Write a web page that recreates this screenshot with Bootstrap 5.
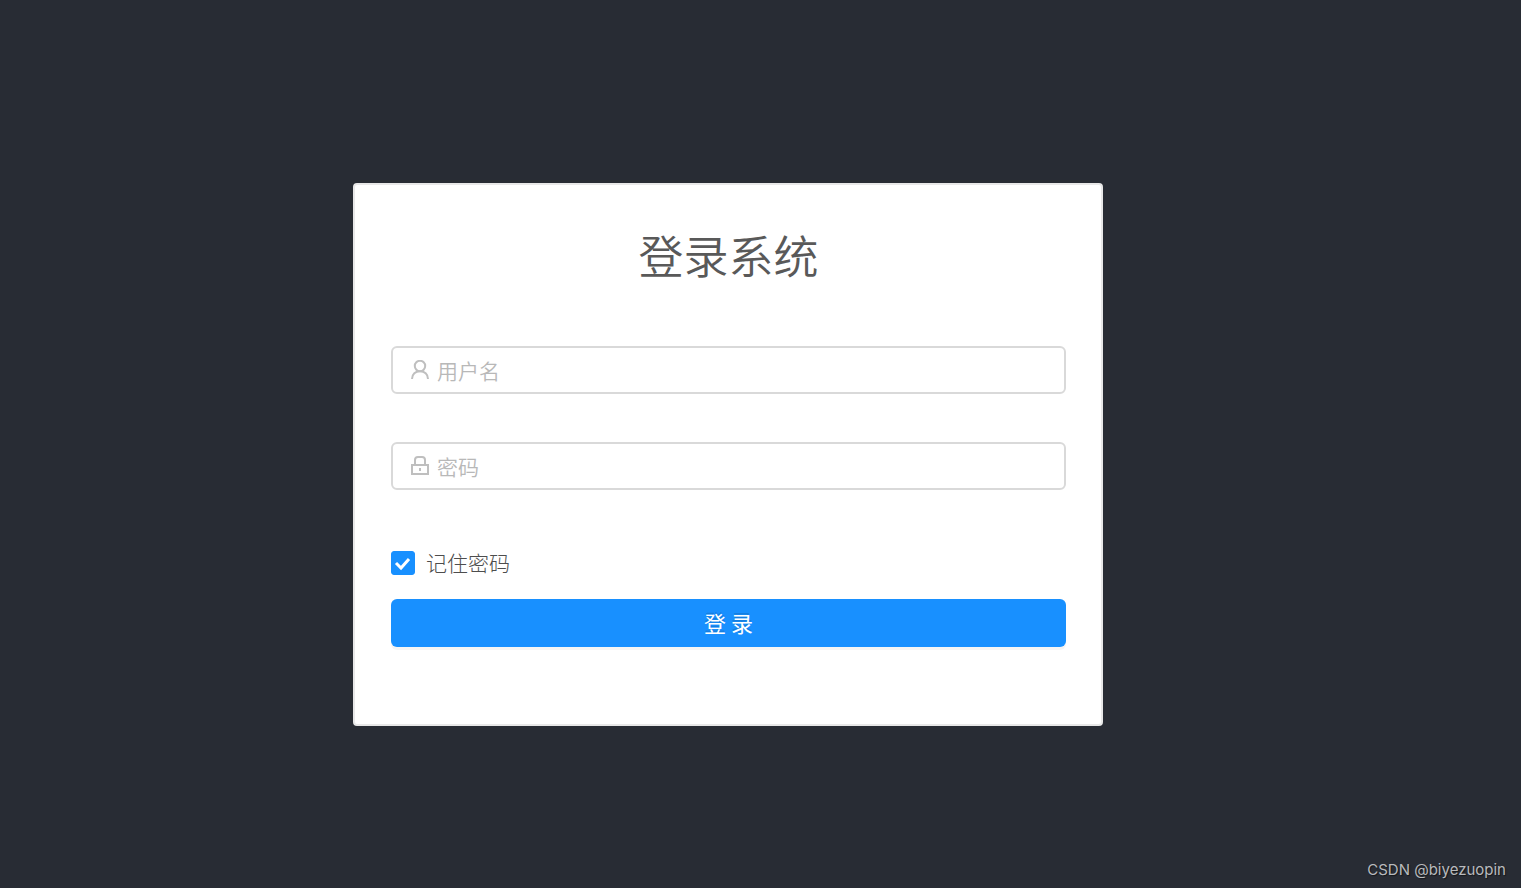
<!DOCTYPE html>
<html lang="zh-CN">
<head>
<meta charset="utf-8">
<meta name="viewport" content="width=device-width, initial-scale=1">
<title>登录系统</title>
<link href="https://cdn.jsdelivr.net/npm/bootstrap@5.3.0/dist/css/bootstrap.min.css" rel="stylesheet">
<style>
  body { background: #282c34; color: #595959; font-family: "Noto Sans CJK SC", sans-serif; }
  .login-main { padding: 56px 65px 0 0; }
  .login-card { max-width: 750px; border: 2px solid #e8e8e8; border-radius: 4px; padding: 36px 35px 77px 36px; }
  .login-title { font-size: 45px; line-height: 68px; font-weight: 350; margin-bottom: 57px; color: #595959; }
  .field { height: 48px; margin-bottom: 48px; border: 2px solid #d9d9d9; border-radius: 6px; padding: 0 16px 0 17px; }
  .field:focus-within { border-color: #1890ff; }
  .field svg { width: 20px; height: 20px; flex: none; fill: none; stroke: #bfbfbf; stroke-width: 2; }
  .field input { font-size: 21px; line-height: 32px; font-weight: 350; padding: 0; margin-left: 7px; box-shadow: none !important; }
  .field input::placeholder { color: #b8b8b8; }
  .remember { height: 51px; margin-bottom: 10px; font-size: 21px; font-weight: 300; }
  .remember .form-check-input { width: 24px; height: 24px; border-radius: 3px; }
  .remember .form-check-input:checked {
    background-color: #1890ff; border-color: #1890ff; background-size: 24px 24px;
    background-image: url("data:image/svg+xml,%3Csvg xmlns='http://www.w3.org/2000/svg' viewBox='0 0 24 24'%3E%3Cpath fill='none' stroke='white' stroke-width='3' d='M5 12L10 17L18 8'/%3E%3C/svg%3E");
  }
  .remember label { margin-left: 11px; line-height: 32px; padding-bottom: 3px; color: #4d4d4d; }
  .login-btn { height: 48px; padding: 0 0 2px; border: 0; border-radius: 6px; background: #1890ff; color: #fff; font-size: 22px; line-height: 46px; box-shadow: 0 3px 0 rgba(0,0,0,.04); text-shadow: 0 -2px 0 rgba(0,0,0,.12); }
  .login-btn:hover { background: #40a9ff; color: #fff; }
  .watermark { height: 36px; line-height: 36px; padding-right: 15px; font-family: Inter, sans-serif; font-size: 15px; color: #b8babd; text-shadow: 1px 1px 1px rgba(0,0,0,.5); }
</style>
</head>
<body class="min-vh-100 d-flex flex-column">
  <main class="login-main flex-grow-1 d-flex align-items-center justify-content-center">
    <form class="login-card bg-white w-100">
      <h1 class="login-title text-center">登录系统</h1>
      <div class="field d-flex align-items-center">
        <svg viewBox="0 0 20 20" aria-hidden="true"><circle cx="10" cy="6" r="5.200"/><path d="M2 19C2 14.200 5.500 11.200 10 11.200S18 14.200 18 19"/></svg>
        <input class="form-control border-0 bg-transparent" type="text" placeholder="用户名" aria-label="用户名" autocomplete="username">
      </div>
      <div class="field d-flex align-items-center">
        <svg viewBox="0 0 20 20" aria-hidden="true"><path d="M2 9H18V18H2ZM5 9V4Q5 1 8 1H12Q15 1 15 4V9M10 12V15"/></svg>
        <input class="form-control border-0 bg-transparent" type="password" placeholder="密码" aria-label="密码" autocomplete="current-password">
      </div>
      <div class="remember d-flex align-items-center">
        <input class="form-check-input m-0" type="checkbox" id="remember" checked>
        <label for="remember">记住密码</label>
      </div>
      <button class="login-btn btn w-100" type="submit">登 录</button>
    </form>
  </main>
  <footer class="watermark text-end">CSDN @biyezuopin</footer>
  <script src="https://cdn.jsdelivr.net/npm/bootstrap@5.3.0/dist/js/bootstrap.bundle.min.js"></script>
</body>
</html>
